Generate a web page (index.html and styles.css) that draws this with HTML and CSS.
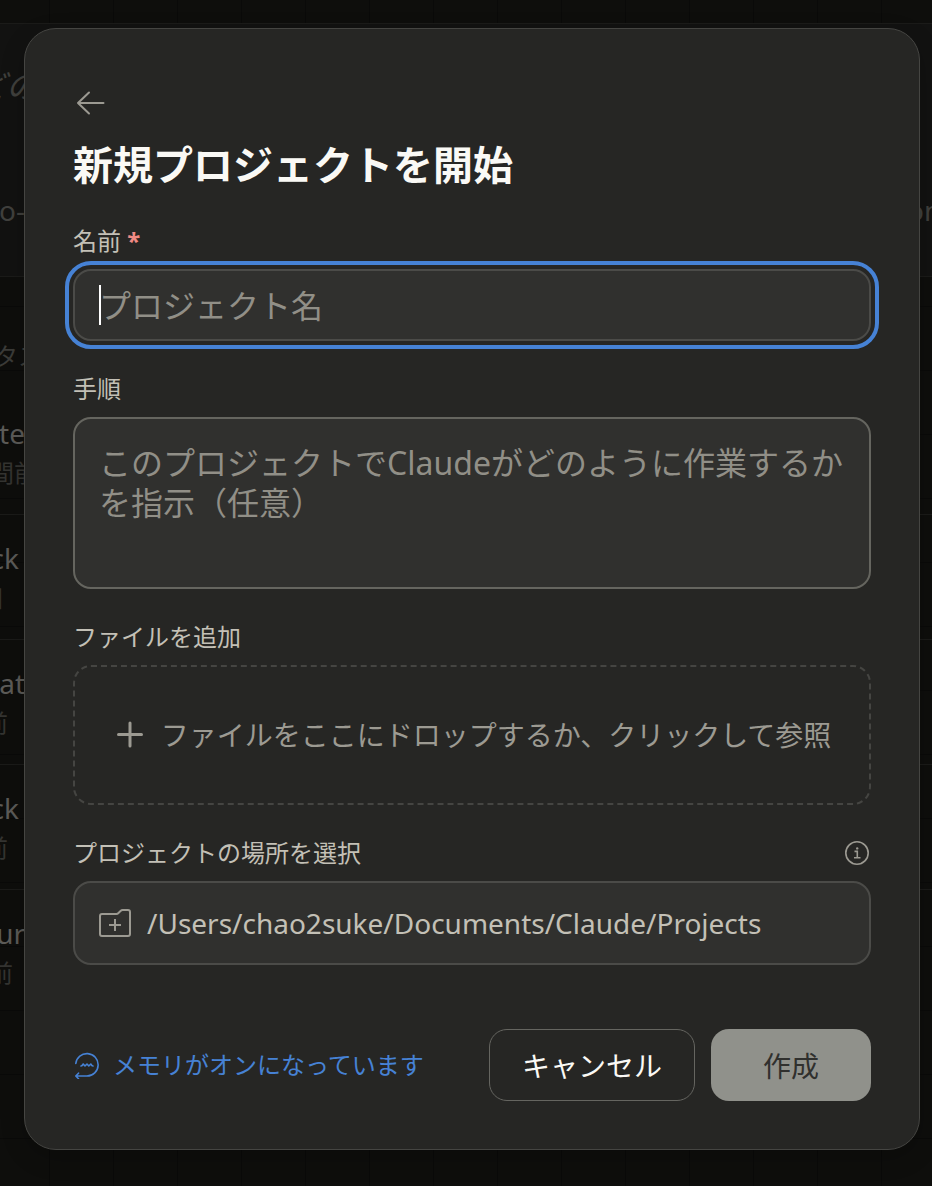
FILE: index.html
```html
<!DOCTYPE html>
<html lang="ja">
<head>
    <meta charset="UTF-8">
    <meta name="viewport" content="width=device-width, initial-scale=1.0">
    <title>新規プロジェクトを開始</title>
    <link rel="stylesheet" href="styles.css">
</head>
<body>
    <!-- Dimmed page behind the dialog -->
    <div class="backdrop" aria-hidden="true">
        <div class="backdrop-panel">
            <p class="backdrop-heading">どの</p>
            <div class="backdrop-line">
                <span class="backdrop-start">o-</span>
                <span class="backdrop-end">on</span>
            </div>
        </div>
        <p class="backdrop-section"><span class="backdrop-start reach">タス</span></p>
        <div class="backdrop-row">
            <span class="backdrop-start row-name">te</span>
            <span class="backdrop-start row-date reach">間前</span>
        </div>
        <div class="backdrop-row">
            <span class="backdrop-start row-name inset-small">ck</span>
            <span class="backdrop-start row-date inset-large">日</span>
        </div>
        <div class="backdrop-row">
            <span class="backdrop-start row-name">at</span>
            <span class="backdrop-start row-date inset-medium">前</span>
        </div>
        <div class="backdrop-row">
            <span class="backdrop-start row-name inset-small">ck</span>
            <span class="backdrop-start row-date inset-medium">前</span>
        </div>
        <div class="backdrop-row">
            <span class="backdrop-start row-name">ur</span>
            <span class="backdrop-start row-date inset-date">前</span>
        </div>
    </div>

    <main class="modal" role="dialog" aria-labelledby="modalTitle">
        <button class="back-button" type="button" aria-label="戻る">
            <svg width="36" height="36" viewBox="0 0 36 36" fill="none" stroke="currentColor" stroke-width="2" stroke-linecap="round" stroke-linejoin="round">
                <path d="M30.500 18H5M16 7.500L5 18l11 10.500"/>
            </svg>
        </button>
        <h1 class="modal-title" id="modalTitle">新規プロジェクトを開始</h1>

        <form class="project-form">
            <div class="field">
                <label class="field-label" for="projectName">名前 <span class="required">*</span></label>
                <div class="name-box">
                    <input class="text-input" id="projectName" type="text" placeholder="プロジェクト名">
                    <span class="caret"></span>
                </div>
            </div>

            <div class="field">
                <label class="field-label" for="instructions">手順</label>
                <textarea class="text-area" id="instructions" placeholder="このプロジェクトでClaudeがどのように作業するかを指示（任意）"></textarea>
            </div>

            <div class="field">
                <span class="field-label" id="filesLabel">ファイルを追加</span>
                <button class="dropzone" type="button" aria-describedby="filesLabel">
                    <svg width="32" height="32" viewBox="0 0 32 32" fill="none" stroke="currentColor" stroke-width="3" stroke-linecap="round">
                        <path d="M17 4v23M5.500 15.500h23"/>
                    </svg>
                    <span>ファイルをここにドロップするか、クリックして参照</span>
                </button>
            </div>

            <div class="field">
                <div class="label-row">
                    <span class="field-label" id="locationLabel">プロジェクトの場所を選択</span>
                    <button class="info-button" type="button" aria-label="詳細">
                        <svg width="28" height="28" viewBox="0 0 28 28" fill="none" stroke="currentColor" stroke-width="1.600">
                            <circle cx="14" cy="14" r="11.200"/>
                            <path d="M11.500 12.400h2.800v6.200M11 18.800h6.500"/>
                            <circle cx="14.200" cy="9.400" r="1.200" fill="currentColor" stroke="none"/>
                        </svg>
                    </button>
                </div>
                <button class="location" type="button" aria-describedby="locationLabel">
                    <svg width="32" height="32" viewBox="0 0 32 32" fill="none" stroke="currentColor" stroke-width="2" stroke-linejoin="round">
                        <path d="M3 7h14.500q1 0 1.700-.700l2.600-2.600q.700-.700 1.700-.700H29q2 0 2 2v22q0 2-2 2H3q-2 0-2-2V9q0-2 2-2z"/>
                        <path d="M16 12v12M10 18h12"/>
                    </svg>
                    <span>/Users/chao2suke/Documents/Claude/Projects</span>
                </button>
            </div>

            <div class="form-footer">
                <a class="memory-link" href="#">
                    <svg width="28" height="28" viewBox="0 0 28 28" fill="none" stroke="currentColor" stroke-width="1.600" stroke-linecap="round" stroke-linejoin="round">
                        <path d="M2.800 12.500A11.200 11.200 0 1 1 14 25H3M5.500 22.200L2.800 25l2.700 2.700"/>
                        <path d="M8 15q1.200-.200 2.200-2l1.800 2 2-2 1.800 2 2-2q1 1.800 2.200 2"/>
                    </svg>
                    <span>メモリがオンになっています</span>
                </a>
                <div class="actions">
                    <button class="button button-cancel" type="button">キャンセル</button>
                    <button class="button button-create" type="submit" disabled>作成</button>
                </div>
            </div>
        </form>
    </main>
</body>
</html>
```
FILE: styles.css
```css
* {
    margin: 0;
    padding: 0;
    box-sizing: border-box;
}

body {
    position: relative;
    min-height: 100vh;
    padding: 28px 12px 36px 24px;
    background: #0e0e0c;
    color: #c3c0b6;
    font-family: "Noto Sans", "Noto Sans CJK JP", sans-serif;
}

button,
input,
textarea {
    font-family: inherit;
    color: inherit;
}

svg {
    display: block;
    flex-shrink: 0;
}

/* Backdrop */
.backdrop {
    position: absolute;
    inset: 0;
    overflow: hidden;
    padding-top: 23px;
    background-color: #0e0e0c;
    background-image:
        linear-gradient(90deg, #0a0a09 1px, transparent 1px),
        linear-gradient(#0a0a09 1px, transparent 1px);
    background-size: 64px 64px;
    background-position: 49px 50px;
    color: #5c5b58;
    font-size: 28px;
    line-height: 40px;
    white-space: nowrap;
}

.backdrop-panel {
    display: flex;
    flex-direction: column;
    gap: 84px;
    height: 254px;
    padding-top: 42px;
    border-top: 1px solid #1b1b19;
    border-bottom: 1px solid #1b1b19;
    background: #121211;
    color: #40403d;
}

.backdrop-start {
    display: flex;
    justify-content: flex-end;
    width: 25px;
}

.backdrop-end {
    width: 25px;
}

.reach {
    width: 38px;
}

.backdrop-heading {
    display: flex;
    justify-content: flex-end;
    width: 38px;
    font-size: 32px;
    font-style: italic;
}

.backdrop-line {
    display: flex;
    justify-content: space-between;
}

.backdrop-section {
    height: 113px;
    padding-top: 59px;
    color: #3b3b38;
    font-size: 24px;
}

.backdrop-section .reach {
    width: 42px;
}

.backdrop-row {
    height: 125px;
    padding-top: 23px;
    border-bottom: 1px solid #1b1b19;
}

.backdrop-row:last-child {
    border-bottom: none;
}

.row-date {
    color: #343431;
    font-size: 24px;
}

.inset-small {
    padding-right: 6px;
}

.inset-date {
    padding-right: 12px;
}

.inset-medium {
    padding-right: 17px;
}

.inset-large {
    padding-right: 20px;
}

/* Modal */
.modal {
    position: relative;
    padding: 48px;
    border: 1px solid #454542;
    border-radius: 32px;
    background: #262624;
    box-shadow: 0 8px 24px rgba(0, 0, 0, 0.2);
}

.back-button {
    display: flex;
    align-items: center;
    width: 36px;
    height: 52px;
    margin-bottom: 12px;
    border: none;
    background: none;
    color: #9c9a92;
}

.modal-title {
    margin-bottom: 36px;
    color: #faf9f5;
    font-size: 40px;
    font-weight: 700;
    line-height: 48px;
}

.project-form {
    display: flex;
    flex-direction: column;
    gap: 32px;
}

.field {
    display: flex;
    flex-direction: column;
    gap: 12px;
}

.field-label {
    font-size: 24px;
    line-height: 32px;
}

.required {
    color: #f08a84;
    font-weight: 700;
}

.label-row {
    display: flex;
    align-items: center;
    justify-content: space-between;
}

.name-box {
    position: relative;
    display: flex;
}

.text-input,
.text-area {
    width: 100%;
    border: 2px solid #4b4b48;
    border-radius: 18px;
    background: #30302e;
    font-size: 32px;
    line-height: 40px;
}

.text-input {
    height: 72px;
    padding: 0 24px;
    outline: 4px solid #4682d5;
    outline-offset: 4px;
    caret-color: transparent;
}

.caret {
    position: absolute;
    top: 16px;
    left: 26px;
    width: 2px;
    height: 40px;
    background: #ffffff;
}

.text-area {
    display: block;
    height: 172px;
    padding: 24px;
    border-color: #65655f;
    resize: none;
}

.text-input::placeholder,
.text-area::placeholder {
    color: #918f87;
    opacity: 1;
}

.dropzone {
    display: flex;
    align-items: center;
    justify-content: center;
    gap: 16px;
    height: 140px;
    border: 2px dashed #454542;
    border-radius: 18px;
    background: none;
    color: #9c9a92;
    font-size: 28px;
    line-height: 40px;
    white-space: nowrap;
}

.info-button {
    border: none;
    background: none;
    color: #9c9a92;
}

.location {
    display: flex;
    align-items: center;
    gap: 16px;
    height: 84px;
    padding: 0 24px;
    border: 2px solid #4b4b48;
    border-radius: 18px;
    background: #30302e;
    font-size: 28px;
    line-height: 40px;
}

.location svg {
    color: #9c9a92;
}

.form-footer {
    display: flex;
    align-items: center;
    justify-content: space-between;
    margin-top: 32px;
}

.memory-link {
    display: flex;
    align-items: center;
    gap: 12px;
    color: #4682d5;
    font-size: 24px;
    line-height: 32px;
    text-decoration: none;
}

.actions {
    display: flex;
    gap: 16px;
}

.button {
    height: 72px;
    border-radius: 18px;
    font-size: 28px;
}

.button-cancel {
    padding: 0 32px;
    border: 1px solid #656560;
    background: none;
    color: #faf9f5;
}

.button-create {
    padding: 0 52px;
    border: none;
    background: #90918b;
    color: #30302e;
}
```
